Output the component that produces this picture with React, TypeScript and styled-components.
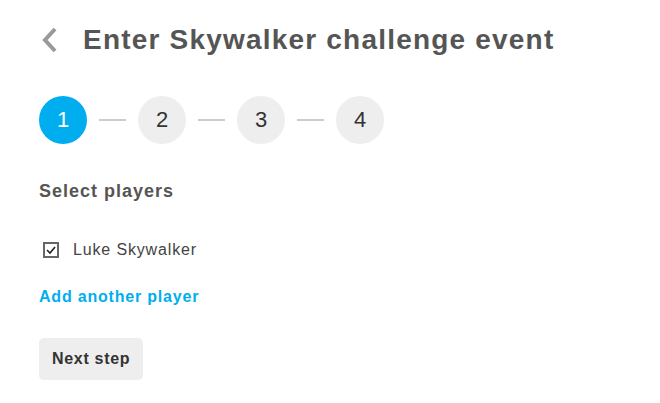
import * as React from 'react';
import styled, { createGlobalStyle } from 'styled-components';


const GlobalStyle = createGlobalStyle`
  html, body {
    margin: 0;
    padding: 0;
    background: #fff;
  }
  body {
    font-family: "Liberation Sans", Arial, sans-serif;
    color: #444;
  }
`;

const Page = styled.div`
  padding: 23px 39px 0 39px;
  display: flex;
  flex-direction: column;
  align-items: flex-start;
`;

const Header = styled.div`
  display: flex;
  align-items: center;
  gap: 25px;
  padding-left: 2px;
`;

const BackButton = styled.a`
  display: flex;
  width: 17px;
  height: 26px;
  color: #999;
  cursor: pointer;
`;

const Title = styled.h1`
  margin: 0;
  font-size: 28px;
  line-height: 34px;
  font-weight: bold;
  letter-spacing: 1.2px;
  color: #555;
`;

const Steps = styled.div`
  display: flex;
  align-items: center;
  gap: 12px;
  margin-top: 39px;
`;

const StepCircle = styled.div<{ $active?: boolean }>`
  width: 48px;
  height: 48px;
  border-radius: 50%;
  display: flex;
  align-items: center;
  justify-content: center;
  font-size: 22px;
  background: ${p => p.$active ? '#00aeef' : '#eeeeee'};
  color: ${p => p.$active ? '#fff' : '#333'};
`;

const StepLine = styled.div`
  width: 27px;
  height: 2px;
  background: #ccc;
`;

const SectionTitle = styled.h2`
  margin: 36px 0 0 0;
  font-size: 18px;
  line-height: 22px;
  font-weight: bold;
  letter-spacing: 1px;
  color: #555;
`;

const PlayerRow = styled.label`
  display: flex;
  align-items: center;
  gap: 14px;
  margin-top: 38px;
  padding-left: 4px;
  height: 20px;
  font-size: 16px;
  letter-spacing: 0.85px;
  color: #444;
`;

const CheckBox = styled.span`
  display: flex;
  width: 16px;
  height: 16px;
`;

const AddLink = styled.a`
  margin-top: 27px;
  font-size: 16px;
  line-height: 20px;
  font-weight: bold;
  letter-spacing: 0.8px;
  color: #00aeef;
  cursor: pointer;
`;

const NextButton = styled.button`
  margin-top: 31px;
  height: 42px;
  padding: 0 13px;
  border: none;
  border-radius: 5px;
  background: #eeeeee;
  font-family: "Liberation Sans", Arial, sans-serif;
  font-size: 16px;
  font-weight: bold;
  letter-spacing: 0.7px;
  color: #333;
  cursor: pointer;
`;

const steps = [1, 2, 3, 4];

export default function App() {
    return (
        <>
            <GlobalStyle />
            <Page>
                <Header>
                    <BackButton>
                        <svg width="17" height="26" viewBox="0 0 17 26">
                            <polyline points="14,2 4,13 14,24" fill="none" stroke="currentColor" strokeWidth="4" />
                        </svg>
                    </BackButton>
                    <Title>Enter Skywalker challenge event</Title>
                </Header>

                <Steps>
                    {steps.map((n, i) => (
                        <React.Fragment key={n}>
                            {i > 0 && <StepLine />}
                            <StepCircle $active={n === 1}>{n}</StepCircle>
                        </React.Fragment>
                    ))}
                </Steps>

                <SectionTitle>Select players</SectionTitle>

                <PlayerRow>
                    <CheckBox>
                        <svg width="16" height="16" viewBox="0 0 16 16">
                            <rect x="1" y="1" width="14" height="14" fill="#fff" stroke="#666" strokeWidth="2" />
                            <polyline points="4,8 7,11 12,5" fill="none" stroke="#222" strokeWidth="1.6" />
                        </svg>
                    </CheckBox>
                    Luke Skywalker
                </PlayerRow>

                <AddLink>Add another player</AddLink>

                <NextButton>Next step</NextButton>
            </Page>
        </>
    );
}
